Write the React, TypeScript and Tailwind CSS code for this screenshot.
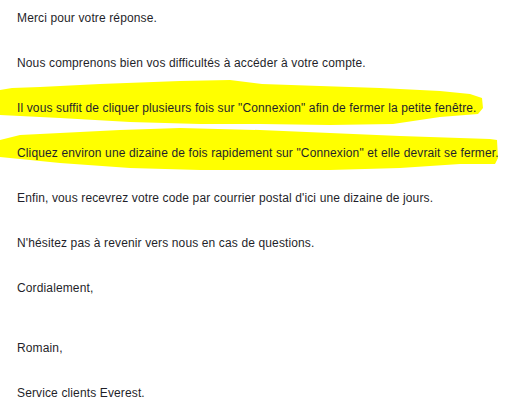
const lines = {
  intro: "Merci pour votre réponse.",
  second: "Nous comprenons bien vos difficultés à accéder à votre compte.",
  tip1: "Il vous suffit de cliquer plusieurs fois sur \"Connexion\" afin de fermer la petite fenêtre.",
  tip2: "Cliquez environ une dizaine de fois rapidement sur \"Connexion\" et elle devrait se fermer.",
  code: "Enfin, vous recevrez votre code par courrier postal d'ici une dizaine de jours.",
  contact: "N'hésitez pas à revenir vers nous en cas de questions.",
};

// marker strokes, drawn in page coordinates
const marker1 =
  "M0,90 L12,88 L40,87 L100,84 L180,81 L230,80 L262,84 L320,86 L380,88 L440,91 L470,94 L482,98 L483,108 L478,114 L440,117 L393,124 L330,125 L260,124 L200,124 L130,122 L60,118 L20,116 L0,115 Z";
const marker2 =
  "M0,140 L20,135 L60,133 L120,130 L180,128 L260,130 L330,133 L400,136 L460,138 L490,139 L497,140 L498,158 L495,164 L460,164 L400,168 L330,170 L260,170 L200,170 L130,168 L60,163 L20,159 L0,157 Z";

function Highlighted({ text, path, top }: { text: string; path: string; top: number }) {
  return (
    <div className="relative">
      <svg
        className="absolute left-[-17px] top-[-26px] pointer-events-none"
        width={519}
        height={60}
        viewBox={`0 ${top - 26} 519 60`}
      >
        <path d={path} fill="#ffff00" />
      </svg>
      <p className="relative">{text}</p>
    </div>
  );
}

export default function App() {
  return (
    <div className="min-h-[408px] w-[519px] bg-white pt-[11px] pl-[17px] text-[12px] leading-[15px] tracking-[0.13px] text-[#1f1f2a] font-['Liberation_Sans',Arial,sans-serif]">
      <div className="flex flex-col gap-[30px]">
        <p>{lines.intro}</p>
        <p>{lines.second}</p>
        <Highlighted text={lines.tip1} path={marker1} top={101} />
        <Highlighted text={lines.tip2} path={marker2} top={146} />
        <p>{lines.code}</p>
        <p>{lines.contact}</p>
        <p>Cordialement,</p>
        <p className="mt-[15px]">Romain,</p>
        <p>Service clients Everest.</p>
      </div>
    </div>
  );
}
